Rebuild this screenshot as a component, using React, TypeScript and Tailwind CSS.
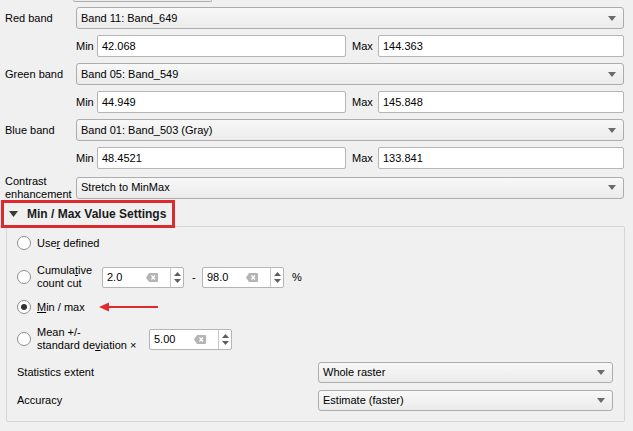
import React from "react";

function Arrow() {
  return (
    <svg width="8" height="5" viewBox="0 0 8 5" className="shrink-0">
      <polygon points="0,0 8,0 4,5" fill="#6b6b6b" />
    </svg>
  );
}

function Combo({ text, className }: { text: string; className: string }) {
  return (
    <div
      className={`${className} h-[22px] flex items-center justify-between pl-[4px] pr-[7px] border border-[#adadad] rounded-[3px] bg-linear-to-b from-[#f8f8f8] to-[#ebebeb]`}
    >
      <span>{text}</span>
      <Arrow />
    </div>
  );
}

function Field({ value, className }: { value: string; className: string }) {
  return (
    <div
      className={`${className} h-[22px] flex items-center px-[4px] bg-white border border-[#b5b5b5] rounded-[2px]`}
    >
      {value}
    </div>
  );
}

function Spin({ value, className }: { value: string; className: string }) {
  return (
    <div
      className={`${className} h-[21px] flex items-stretch bg-white border border-[#b5b5b5] rounded-[2px]`}
    >
      <div className="flex-1 flex items-center pl-[4px]">{value}</div>
      <div className="w-[12px] flex items-center">
        <svg width="12" height="9" viewBox="0 0 12 9">
          <path d="M3 0 H11 Q12 0 12 1 V8 Q12 9 11 9 H3 L0 4.5 Z" fill="#b4b4b4" />
          <path d="M5.5 2.5 L9 6.5 M9 2.5 L5.5 6.5" stroke="#fff" strokeWidth="1.3" />
        </svg>
      </div>
      <div className="w-[12px]" />
      <div className="w-[1px] bg-[#c8c8c8]" />
      <div className="w-[12px] flex flex-col items-center justify-center gap-[3px]">
        <svg width="7" height="4" viewBox="0 0 7 4">
          <polygon points="0,4 7,4 3.5,0" fill="#5e5e5e" />
        </svg>
        <svg width="7" height="4" viewBox="0 0 7 4">
          <polygon points="0,0 7,0 3.5,4" fill="#5e5e5e" />
        </svg>
      </div>
    </div>
  );
}

function Radio({ checked }: { checked?: boolean }) {
  return (
    <div className="w-[14px] h-[14px] shrink-0 rounded-full border border-[#8d8d8d] bg-white flex items-center justify-center">
      {checked && <div className="w-[6px] h-[6px] rounded-full bg-[#333]" />}
    </div>
  );
}

function BandRows({ label, band, min, max }: { label: string; band: string; min: string; max: string }) {
  return (
    <>
      <div className="flex items-center h-[22px]">
        <div className="w-[71px]">{label}</div>
        <Combo text={band} className="w-[548px]" />
      </div>
      <div className="flex items-center h-[22px]">
        <div className="w-[71px]" />
        <span className="w-[21px]">Min</span>
        <Field value={min} className="w-[249px]" />
        <span className="ml-[6px] w-[26px]">Max</span>
        <Field value={max} className="w-[246px]" />
      </div>
    </>
  );
}

export default function App() {
  return (
    <div className="w-[633px] h-[431px] overflow-hidden bg-[#f0f0f0] font-['Liberation_Sans',Arial,sans-serif] text-[11px] leading-[13px] text-black">
      <div className="ml-[73px] w-[139px] h-[2px] border-x border-b border-[#adadad] rounded-b-[2px] bg-[#ececec]" />
      <div className="mt-[5px] flex flex-col gap-[6px] pl-[5px]">
        <BandRows label="Red band" band="Band 11: Band_649" min="42.068" max="144.363" />
        <BandRows label="Green band" band="Band 05: Band_549" min="44.949" max="145.848" />
        <BandRows label="Blue band" band="Band 01: Band_503 (Gray)" min="48.4521" max="133.841" />
        <div className="flex items-center h-[25px]">
          <div className="w-[71px]">
            Contrast
            <br />
            enhancement
          </div>
          <Combo text="Stretch to MinMax" className="w-[548px]" />
        </div>
      </div>

      <div className="relative z-10 ml-[1px] w-[174px] h-[28px] border-[3px] border-[#dc2a2f] flex items-center pl-[5px] gap-[9px] font-bold text-[12px] text-[#1a1a1a]">
        <svg width="9" height="6" viewBox="0 0 9 6">
          <polygon points="0,0 9,0 4.5,6" fill="#3a3a3a" />
        </svg>
        <span>Min / Max Value Settings</span>
      </div>

      <div className="-mt-[2px] ml-[6px] w-[619px] h-[196px] border border-[#d6d6d6] rounded-[2px] flex flex-col pl-[10px] pt-[7px]">
        <div className="flex items-center h-[18px] gap-[6px]">
          <Radio />
          <span>
            Use<u>r</u> defined
          </span>
        </div>

        <div className="mt-[12px] flex items-center h-[26px]">
          <Radio />
          <div className="ml-[6px] w-[65px]">
            Cumula<u>t</u>ive
            <br />
            count cut
          </div>
          <Spin value="2.0" className="w-[82px]" />
          <span className="ml-[8px] w-[10px]">-</span>
          <Spin value="98.0" className="w-[82px]" />
          <span className="ml-[8px]">%</span>
        </div>

        <div className="mt-[8px] flex items-center h-[18px]">
          <Radio checked />
          <span className="ml-[6px]">
            <u>M</u>in / max
          </span>
          <svg width="60" height="10" viewBox="0 0 60 10" className="ml-[14px]">
            <line x1="8" y1="5" x2="59" y2="5" stroke="#e2292e" strokeWidth="2" />
            <polygon points="0,5 10,0.5 10,9.5" fill="#e2292e" />
          </svg>
        </div>

        <div className="mt-[10px] flex items-center h-[26px]">
          <Radio />
          <div className="ml-[6px] w-[112px]">
            Mean +/-
            <br />
            standard de<u>v</u>iation ×
          </div>
          <Spin value="5.00" className="w-[83px]" />
        </div>

        <div className="mt-[10px] flex items-center h-[21px]">
          <div className="w-[301px]">Statistics extent</div>
          <Combo text="Whole raster" className="w-[295px] !h-[21px]" />
        </div>

        <div className="mt-[7px] flex items-center h-[21px]">
          <div className="w-[301px]">Accuracy</div>
          <Combo text="Estimate (faster)" className="w-[295px] !h-[21px]" />
        </div>
      </div>
    </div>
  );
}
